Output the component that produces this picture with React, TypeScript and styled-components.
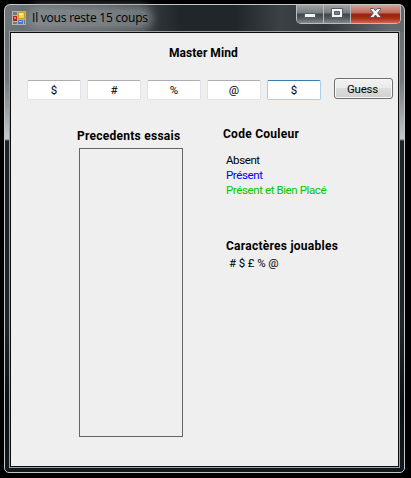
import React from "react";
import styled, { createGlobalStyle } from "styled-components";

const GlobalStyle = createGlobalStyle`
  * { box-sizing: border-box; }
  html, body { margin: 0; background: #000; overflow: hidden; }
`;

const Desktop = styled.div`
  width: 411px;
  height: 478px;
  padding: 4px 6px 5px 4px;
  background: #000;
  font: 12px/15px Roboto, "Liberation Sans", sans-serif;
  color: #000;
`;

const Window = styled.div`
  display: flex;
  flex-direction: column;
  width: 401px;
  height: 469px;
  padding: 0 4px 4px;
  border: 1px solid #c3c7c8;
  border-radius: 6px 6px 5px 5px;
  background:
    linear-gradient(90deg, #70757a 0, #63686c 45px, #50565a 100px, rgba(32, 38, 42, 0) 175px) 0 0 / 100% 27px no-repeat,
    linear-gradient(90deg, #20262a 0, #20262a 230px, #3b4145 275px, #30363a 320px, #62686b 385px) 0 0 / 100% 27px no-repeat,
    linear-gradient(180deg, #64696d 0, #74787c 75px, #c4c6c8 134px, #1c2327 136px, #1e252a 320px, #080f17 400px, #111a20 100%);
`;

const TitleBar = styled.header`
  display: flex;
  align-items: flex-start;
  justify-content: space-between;
  height: 26px;
  flex: none;
`;

const Caption = styled.div`
  display: flex;
  align-items: center;
  gap: 6px;
  height: 26px;
  padding-left: 3px;
`;

const CaptionText = styled.span`
  font: 12px/16px "Open Sans", "Noto Sans", sans-serif;
  letter-spacing: -0.22px;
  white-space: nowrap;
  border-radius: 8px;
  background: rgba(145, 151, 155, 0.62);
  box-shadow: 0 0 8px 5px rgba(145, 151, 155, 0.62);
`;

const Controls = styled.div`
  display: flex;
  width: 105px;
  height: 19px;
  margin-right: -1px;
  border: 1px solid #b9bdbf;
  border-top: 0;
  border-radius: 0 0 5px 5px;
  overflow: hidden;
`;

const ControlButton = styled.button<{ $close?: boolean }>`
  display: flex;
  align-items: center;
  justify-content: center;
  flex: ${(p) => (p.$close ? "1" : "0 0 27px")};
  height: 18px;
  padding: 0;
  border: 0;
  border-right: ${(p) => (p.$close ? "0" : "1px solid #b4b8ba")};
  background: ${(p) =>
    p.$close
      ? "linear-gradient(180deg, #d6a196 0, #bd6b5c 8px, #9c2011 9px, #a92b14 13px, #d0674b 18px)"
      : "linear-gradient(180deg, #a0a4a6 0, #777c7f 8px, #40464a 9px, #52585c 13px, #848a8e 18px)"};
`;

const Client = styled.main`
  width: 391px;
  height: 437px;
  flex: none;
  display: flex;
  flex-direction: column;
  border: 1px solid #9a9fa2;
  background: #efefef;
  box-shadow: inset 0 0 0 1px #090d10;
  padding: 14px 2px 2px 17px;
`;

const Label = styled.div<{ $x?: number; $track?: number }>`
  height: 15px;
  padding-left: ${(p) => p.$x ?? 0}px;
  font-weight: 700;
  letter-spacing: ${(p) => p.$track ?? 0.26}px;
  white-space: nowrap;
`;

const GuessRow = styled.div`
  display: flex;
  align-items: flex-start;
  gap: 6px;
  margin-top: 17px;
  height: 22px;
`;

const Cell = styled.input<{ $focus?: boolean }>`
  width: 54px;
  height: 20px;
  margin: 2px 0 0;
  padding: 0;
  border: 1px solid ${(p) => (p.$focus ? "#a9cfe8" : "#e2e3ea")};
  border-top-color: ${(p) => (p.$focus ? "#3d7bad" : "#abadb3")};
  border-radius: 2px;
  outline: 0;
  background: #fff;
  color: #000;
  text-align: center;
  font: 11.5px/15px Roboto, sans-serif;
`;

const GuessButton = styled.button`
  width: 59px;
  height: 21px;
  margin-left: 7px;
  padding: 1px 2px 0 0;
  border: 1px solid #707070;
  border-radius: 3px;
  background: linear-gradient(180deg, #f2f2f2 0, #ebebeb 50%, #dddddd 50%, #cfcfcf 100%);
  box-shadow: inset 0 0 0 1px #f8f8f8;
  color: #000;
  font: 11.5px/15px Roboto, sans-serif;
  letter-spacing: -0.2px;
`;

const Columns = styled.div`
  display: flex;
`;

const History = styled.section`
  width: 196px;
  padding: 29px 0 0 50px;
`;

const HistoryList = styled.div`
  width: 104px;
  height: 289px;
  margin: 4px 0 0 2px;
  border: 1px solid #646464;
`;

const Legend = styled.section`
  padding-top: 27px;
`;

const LegendRows = styled.div`
  padding: 11px 0 0 3px;
  margin-bottom: 41px;
`;

const LegendText = styled.div<{ $color?: string }>`
  height: 15px;
  color: ${(p) => p.$color ?? "#000"};
  font-size: 11.5px;
  letter-spacing: -0.4px;
  white-space: nowrap;
`;

const Symbols = styled(LegendText)`
  padding-left: 6px;
  margin-top: 2px;
  letter-spacing: -0.1px;
`;

const FormIcon = () => (
  <svg width="14" height="14" viewBox="0 0 14 14" shapeRendering="crispEdges">
    <path d="M0 0h14v14H0z" fill="#b4b6b6" />
    <path d="M1 1h4v3H1zM1 11h4v2H1z" fill="#74787b" />
    <path d="M1 5h4v5H1z" fill="#b32419" />
    <path d="M2 6h2v2H2z" fill="#ef7869" />
    <path d="M6 1h7v7H6z" fill="#d59b18" />
    <path d="M7 2h5v5H7z" fill="#ffd54f" />
    <path d="M7 2h4v2H7z" fill="#fff0a3" />
    <path d="M6 9h5v4H6z" fill="#4079ce" />
    <path d="M7 10h3v1H7z" fill="#9acbff" />
    <path d="M12 9h1v4h-1z" fill="#686d70" />
  </svg>
);

const MinIcon = () => (
  <svg width="12" height="18" viewBox="0 0 12 18">
    <rect x=".5" y="8.5" width="11" height="4" rx=".5" fill="#f4f4f4" stroke="#555a68" />
  </svg>
);

const MaxIcon = () => (
  <svg width="12" height="18" viewBox="0 0 12 18">
    <path d="M.5 3.5h11v9H.5z" fill="#f5f5f5" stroke="#555a68" />
    <path d="M3.5 6.5h5v3h-5z" fill="#7b8083" stroke="#555a68" />
  </svg>
);

const CloseIcon = () => (
  <svg width="13" height="18" viewBox="0 0 13 18">
    <path
      d="M1.5 3.5h3l2 2.2 2-2.2h3v1L8.7 8l2.8 3.5v1h-3l-2-2.4-2 2.4h-3v-1L4.3 8 1.5 4.5z"
      fill="#f5f5f5"
      stroke="#555a68"
    />
  </svg>
);

const guess = ["$", "#", "%", "@", "$"];

export default function App() {
  return (
    <>
      <GlobalStyle />
      <Desktop>
        <Window>
          <TitleBar>
            <Caption>
              <FormIcon />
              <CaptionText>Il vous reste 15 coups</CaptionText>
            </Caption>
            <Controls>
              <ControlButton aria-label="Réduire"><MinIcon /></ControlButton>
              <ControlButton aria-label="Agrandir"><MaxIcon /></ControlButton>
              <ControlButton $close aria-label="Fermer"><CloseIcon /></ControlButton>
            </Controls>
          </TitleBar>
          <Client>
            <Label $x={142} $track={0.05}>Master Mind</Label>
            <GuessRow>
              {guess.map((symbol, i) => (
                <Cell key={i} defaultValue={symbol} maxLength={1} $focus={i === 4} />
              ))}
              <GuessButton>Guess</GuessButton>
            </GuessRow>
            <Columns>
              <History>
                <Label>Precedents essais</Label>
                <HistoryList />
              </History>
              <Legend>
                <Label>Code Couleur</Label>
                <LegendRows>
                  <LegendText>Absent</LegendText>
                  <LegendText $color="#0000ff">Présent</LegendText>
                  <LegendText $color="#00c800">Présent et Bien Placé</LegendText>
                </LegendRows>
                <Label $x={3}>Caractères jouables</Label>
                <Symbols>{"# $ £ % @"}</Symbols>
              </Legend>
            </Columns>
          </Client>
        </Window>
      </Desktop>
    </>
  );
}
